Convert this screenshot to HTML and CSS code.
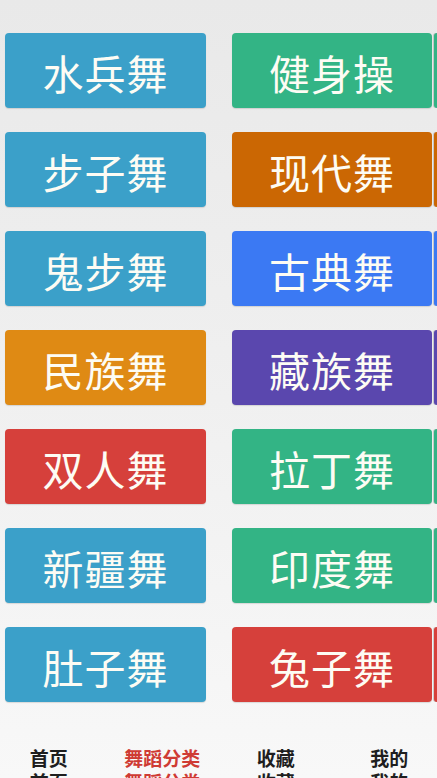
FILE: index.html
```html
<!DOCTYPE html>
<html lang="zh">
<head>
<meta charset="utf-8">
<title>舞蹈分类</title>
<link rel="stylesheet" href="styles.css">
</head>
<body>
<div class="page">
  <div class="grid">
    <div class="row"><div class="btn blue">水兵舞</div><div class="btn green">健身操</div><div class="sliver green"></div></div>
    <div class="row"><div class="btn blue">步子舞</div><div class="btn rust">现代舞</div><div class="sliver rust"></div></div>
    <div class="row"><div class="btn blue">鬼步舞</div><div class="btn azure">古典舞</div><div class="sliver azure"></div></div>
    <div class="row"><div class="btn orange">民族舞</div><div class="btn purple">藏族舞</div><div class="sliver purple"></div></div>
    <div class="row"><div class="btn red">双人舞</div><div class="btn green">拉丁舞</div><div class="sliver green"></div></div>
    <div class="row"><div class="btn blue">新疆舞</div><div class="btn green">印度舞</div><div class="sliver green"></div></div>
    <div class="row"><div class="btn blue">肚子舞</div><div class="btn red">兔子舞</div><div class="sliver red"></div></div>
  </div>
  <nav class="tabbar">
    <div class="tab"><span>首页</span><span>首页</span></div>
    <div class="tab active"><span>舞蹈分类</span><span>舞蹈分类</span></div>
    <div class="tab"><span>收藏</span><span>收藏</span></div>
    <div class="tab"><span>我的</span><span>我的</span></div>
  </nav>
</div>
</body>
</html>
```
FILE: styles.css
```css
html, body {
  margin: 0;
  padding: 0;
}
body {
  width: 437px;
  height: 778px;
  overflow: hidden;
  background: linear-gradient(180deg, #e9e9e9 0%, #efefef 45%, #f8f8f8 100%);
  font-family: "Noto Sans CJK SC", "Noto Sans", sans-serif;
}
.page {
  padding-top: 33px;
  width: 437px;
  overflow: hidden;
}
.grid {
  display: flex;
  flex-direction: column;
  gap: 24px;
}
.row {
  display: flex;
  align-items: stretch;
  height: 75px;
}
.btn {
  flex-shrink: 0;
  display: flex;
  align-items: center;
  justify-content: center;
  border-radius: 4px;
  color: #fdfcf4;
  font-size: 41px;
  letter-spacing: 1px;
  font-weight: 400;
  box-shadow: 0 1px 1px rgba(0, 0, 0, 0.12);
  padding-top: 2px;
  box-sizing: border-box;
}
.btn:first-child {
  margin-left: 5px;
  width: 201px;
}
.btn:nth-child(2) {
  margin-left: 26px;
  width: 200px;
}
.sliver {
  flex-shrink: 0;
  margin-left: 2px;
  width: 10px;
  border-radius: 3px 0 0 3px;
  box-shadow: -1px 0 0 rgba(160, 160, 160, 0.5);
}
.blue { background: #3ba0c9; }
.green { background: #33b485; }
.rust { background: #cb6703; }
.azure { background: #3b79f3; }
.orange { background: #df8a14; }
.purple { background: #5a47ae; }
.red { background: #d6403b; }

.tabbar {
  display: flex;
  margin-top: 44px;
  margin-left: -8px;
}
.tab {
  flex-shrink: 0;
  width: 113.5px;
  display: flex;
  flex-direction: column;
  align-items: center;
  font-size: 19px;
  line-height: 24px;
  font-weight: 700;
  color: #1e1e1e;
}
.tab.active {
  color: #cf3b34;
}
```
